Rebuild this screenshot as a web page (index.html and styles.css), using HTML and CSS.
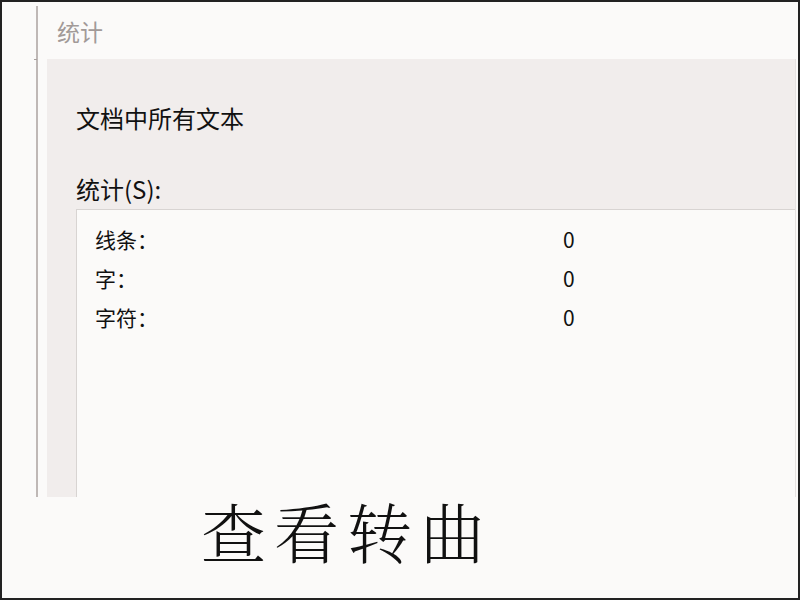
FILE: index.html
```html
<!DOCTYPE html>
<html lang="zh-CN">
<head>
    <meta charset="UTF-8">
    <meta name="viewport" content="width=device-width, initial-scale=1.0">
    <title>统计</title>
    <link rel="stylesheet" href="styles.css">
</head>
<body>
    <div class="frame">
        <div class="dialog">
            <div class="dialog_title">统计</div>
            <div class="panel">
                <p class="scope">文档中所有文本</p>
                <p class="list_label">统计(S):</p>
                <div class="stats_box">
                    <div class="stat_row"><span class="stat_name">线条：</span><span class="stat_value">0</span></div>
                    <div class="stat_row"><span class="stat_name">字：</span><span class="stat_value">0</span></div>
                    <div class="stat_row"><span class="stat_name">字符：</span><span class="stat_value">0</span></div>
                </div>
            </div>
        </div>
        <p class="caption">查看转曲</p>
    </div>
</body>
</html>
```

FILE: styles.css
```css
body {
    margin: 0;
    font-family: "Noto Sans CJK SC", sans-serif;
    background: #fbfaf9;
}
.frame {
    width: 800px;
    height: 600px;
    box-sizing: border-box;
    border: 2px solid #222;
    overflow: hidden;
    background: #fbfaf9;
}
.dialog {
    position: relative;
    margin: 4px 2px 0 34px;
    height: 491px;
    border-left: 2px solid #bfb8b6;
}
/* small tick on the line where the panel starts */
.dialog::before {
    content: "";
    position: absolute;
    left: -4px;
    top: 53px;
    width: 3px;
    height: 1px;
    background: #a8a09e;
}
.dialog_title {
    height: 53px;
    line-height: 50px;
    padding-left: 19px;
    font-size: 23px;
    color: #a29a98;
}
.panel {
    margin-left: 9px;
    height: 438px;
    padding-left: 29px;
    background: #f1edec;
    overflow: hidden;
    border-right: 1px solid #e6e2e1;
}
.scope, .list_label {
    margin: 0;
    height: 30px;
    line-height: 30px;
    font-size: 24px;
    color: #111;
}
.scope {
    padding-top: 44px;
}
.list_label {
    margin-top: 41px;
}
.stats_box {
    margin-top: 5px;
    height: 400px;
    padding: 10px 0 0 18px;
    background: #fbfaf9;
    border-top: 1px solid #d8d4d2;
    border-left: 1px solid #d8d4d2;
}
.stat_row {
    display: flex;
    height: 39px;
    line-height: 39px;
    font-size: 21px;
    color: #111;
}
.stat_name {
    width: 468px;
}
.caption {
    margin: 0;
    padding: 0 0 0 199px;
    font-family: "Noto Serif CJK SC", "Noto Sans CJK SC", serif;
    font-weight: 300;
    font-size: 65px;
    line-height: 66px;
    letter-spacing: 8px;
    color: #111;
}
```
